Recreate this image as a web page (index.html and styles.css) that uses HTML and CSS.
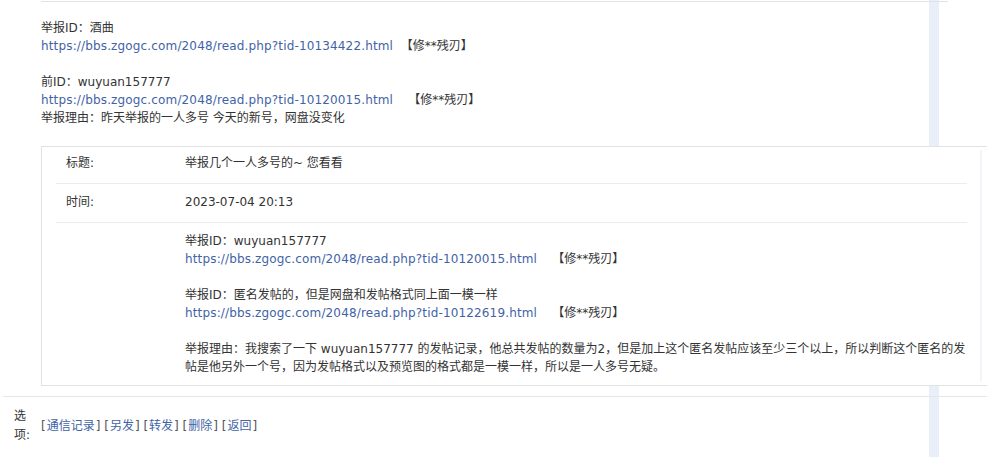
FILE: index.html
```html
<!DOCTYPE html>
<html lang="zh-CN">
<head>
<meta charset="utf-8">
<title>短消息</title>
<link rel="stylesheet" href="styles.css">
</head>
<body>
<div class="page">
  <div class="side-bar"></div>
  <div class="top-rule"></div>

  <div class="report">
    <div class="para">
      举报ID：酒曲<br>
      <a class="url" href="#">https://bbs.zgogc.com/2048/read.php?tid-10134422.html</a>&nbsp;&nbsp;<span class="tag">【修**残刃】</span>
    </div>
    <div class="para">
      前ID：wuyuan157777<br>
      <a class="url" href="#">https://bbs.zgogc.com/2048/read.php?tid-10120015.html</a>&nbsp;&nbsp;&nbsp;&nbsp;<span class="tag">【修**残刃】</span><br>
      举报理由：昨天举报的一人多号 今天的新号，网盘没变化
    </div>
  </div>

  <div class="box">
    <div class="row row-title">
      <div class="label">标题:</div>
      <div class="value">举报几个一人多号的~ 您看看</div>
    </div>
    <div class="row row-time">
      <div class="label">时间:</div>
      <div class="value">2023-07-04 20:13</div>
    </div>
    <div class="row row-body">
      <div class="label"></div>
      <div class="value">
        <div class="para">
          举报ID：wuyuan157777<br>
          <a class="url" href="#">https://bbs.zgogc.com/2048/read.php?tid-10120015.html</a>&nbsp;&nbsp;&nbsp;&nbsp;<span class="tag">【修**残刃】</span>
        </div>
        <div class="para">
          举报ID：匿名发帖的，但是网盘和发帖格式同上面一模一样<br>
          <a class="url" href="#">https://bbs.zgogc.com/2048/read.php?tid-10122619.html</a>&nbsp;&nbsp;&nbsp;&nbsp;<span class="tag">【修**残刃】</span>
        </div>
        <div class="para">
          举报理由：我搜索了一下 wuyuan157777 的发帖记录，他总共发帖的数量为2，但是加上这个匿名发帖应该至少三个以上，所以判断这个匿名的发帖是他另外一个号，因为发帖格式以及预览图的格式都是一模一样，所以是一人多号无疑。
        </div>
      </div>
    </div>
  </div>

  <div class="options">
    <div class="opt-label">选项:</div>
    <div class="opt-links">
      [<a href="#">通信记录</a>] [<a href="#">另发</a>] [<a href="#">转发</a>] [<a href="#">删除</a>] [<a href="#">返回</a>]
    </div>
  </div>
</div>
</body>
</html>
```

FILE: styles.css
```css
html, body {
  margin: 0;
  padding: 0;
  background: #ffffff;
}

body {
  font-family: "DejaVu Sans", "Noto Sans CJK SC", sans-serif;
  font-size: 12px;
  line-height: 18px;
  color: #333333;
}

a {
  color: #3f63a6;
  text-decoration: none;
}

.url {
  letter-spacing: 0.15px;
}

.tag {
  color: #333333;
}

.page {
  position: relative;
  height: 457px;
  overflow: hidden;
}

.side-bar {
  position: absolute;
  left: 929px;
  top: 0;
  width: 10px;
  height: 457px;
  background: #e8eff9;
  z-index: 0;
}

.top-rule {
  position: relative;
  z-index: 1;
  margin: 1px 0 0 41px;
  width: 907px;
  height: 1px;
  background: #e2e2e2;
}

.report {
  position: relative;
  z-index: 1;
  padding: 17px 0 0 41px;
}

.para + .para {
  margin-top: 18px;
}

.box {
  position: relative;
  z-index: 1;
  margin: 19px 0 0 41px;
  border: 1px solid #e2e2e2;
  border-right: none;
  background: #ffffff;
  padding: 0 20px 0 14px;
}

.box::after {
  content: "";
  position: absolute;
  right: 5px;
  top: 3px;
  bottom: 4px;
  width: 2px;
  background: #f1f4f8;
}

.row {
  display: grid;
  grid-template-columns: 129px 1fr;
  border-bottom: 1px solid #ececec;
}

.row:last-child {
  border-bottom: none;
}

.row-title {
  padding: 7px 0 11px;
}

.row-time {
  padding: 9px 0 11px;
}

.row-body {
  padding: 9px 0 9px;
}

.label {
  padding-left: 10px;
}

.options {
  position: relative;
  z-index: 1;
  margin: 10px 0 0 3px;
  border-top: 1px solid #e6e6e6;
  display: flex;
  align-items: center;
  padding: 10px 0 0 11px;
}

.opt-label {
  width: 24px;
  margin-right: 3px;
  line-height: 19px;
}

.opt-links {
  color: #555555;
}

.opt-links a {
  padding: 0 1px;
}
```
